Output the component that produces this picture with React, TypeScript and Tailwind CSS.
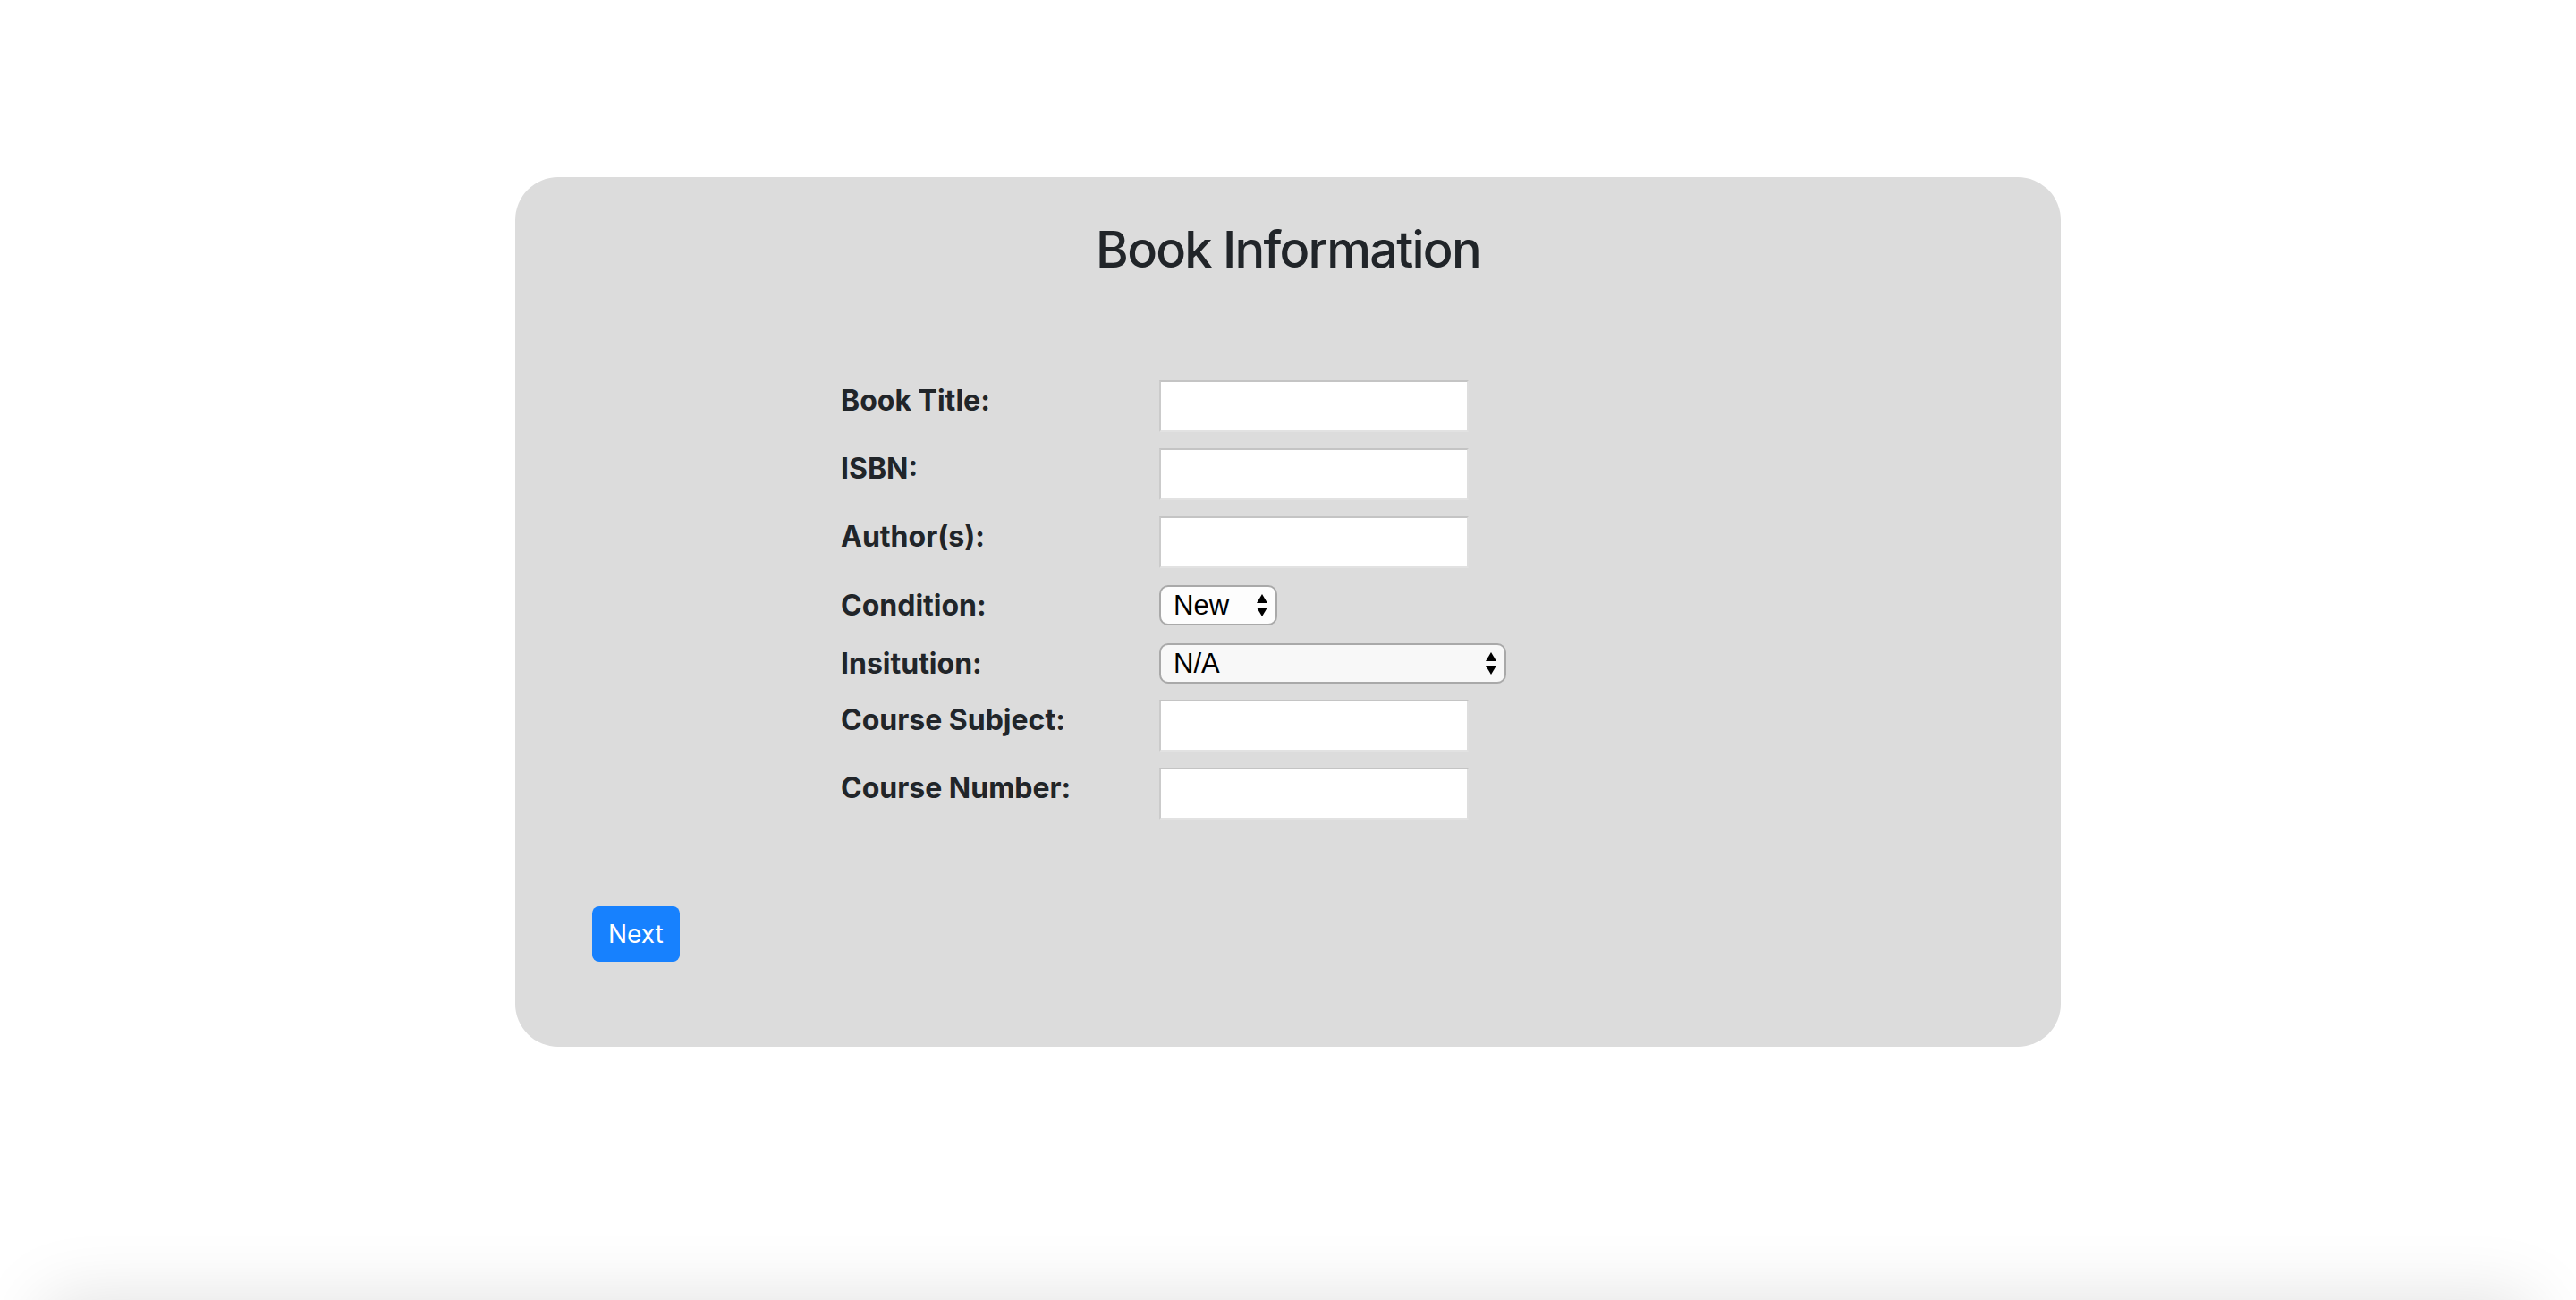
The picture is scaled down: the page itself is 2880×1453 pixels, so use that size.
import { useState } from "react";

const TextRow = ({ label }: { label: string }) => {
  const [value, setValue] = useState("");
  return (
    <div className="flex items-center">
      <label className="w-[356px] pb-[12px] text-[32px] font-bold leading-[46px] text-[#212529]">
        {label}
      </label>
      <input
        value={value}
        onChange={(e) => setValue(e.target.value)}
        className="h-[58px] w-[346px] border-2 border-t-[#c4c4c4] border-l-[#cbcbcb] border-r-[#dedede] border-b-[#e2e2e2] bg-white px-2 text-[28px] outline-none"
        type="text"
      />
    </div>
  );
};

const Arrows = () => (
  <svg width="14" height="26" viewBox="0 0 14 26" className="pointer-events-none absolute right-[10px] top-1/2 -translate-y-1/2">
    <path d="M7 0 L13 10 L1 10 Z" fill="#000" />
    <path d="M1 15 L13 15 L7 25 Z" fill="#000" />
  </svg>
);

const SelectRow = ({
  label,
  options,
  width,
  bg,
  top,
}: {
  label: string;
  options: string[];
  width: string;
  bg: string;
  top: string;
}) => (
  <div className={`flex items-center ${top}`}>
    <label className="w-[356px] text-[32px] font-bold leading-[45px] text-[#212529]">{label}</label>
    <div className={`relative ${width}`}>
      <select
        className={`h-[45px] w-full appearance-none rounded-[10px] border-2 border-[#a9a9a9] ${bg} pl-[14px] pr-[34px] font-['Liberation_Sans',Arial,sans-serif] text-[31px] leading-none text-black outline-none`}
      >
        {options.map((o) => (
          <option key={o}>{o}</option>
        ))}
      </select>
      <Arrows />
    </div>
  </div>
);

export default function App() {
  return (
    <div className="min-h-screen bg-white font-['Inter','Helvetica_Neue',Arial,sans-serif] text-[#212529]">
      <div className="mx-auto mt-[198px] flex h-[972px] w-[1728px] flex-col rounded-[48px] bg-[#dcdcdc]">
        <h3 className="pt-[48px] text-center text-[56px] font-medium leading-[1.2] tracking-[-1.75px]">
          Book Information
        </h3>
        <form className="ml-[364px] mt-[112px] flex flex-col gap-[18px]">
          <TextRow label="Book Title:" />
          <TextRow label="ISBN:" />
          <TextRow label="Author(s):" />
          <SelectRow label="Condition:" options={["New", "Used"]} width="w-[132px]" bg="bg-[#fdfdfd]" top="mt-[1px]" />
          <SelectRow label="Insitution:" options={["N/A"]} width="w-[388px]" bg="bg-[#f8f8f8]" top="mt-[2px]" />
          <TextRow label="Course Subject:" />
          <TextRow label="Course Number:" />
        </form>
        <div className="ml-[86px] mt-[97px]">
          <button className="h-[62px] rounded-[8px] bg-[#1781fe] px-[18px] text-[28px] leading-none text-white">
            Next
          </button>
        </div>
      </div>
      <div className="mx-[50px] mt-[283px] h-[200px] bg-white shadow-[0_0_80px_rgba(0,0,0,0.13)]" />
    </div>
  );
}
